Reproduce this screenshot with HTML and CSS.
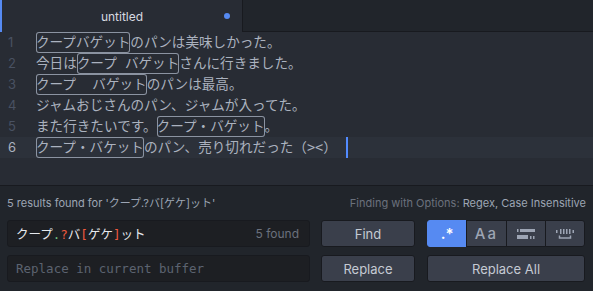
FILE: index.html
```html
<!DOCTYPE html>
<html lang="ja">
  <head>
    <meta charset="UTF-8" />
    <title>untitled</title>
    <link rel="stylesheet" href="styles.css">
  </head>
  <body>
    <div class="tabs">
      <div class="tab active">
        <span class="tab-title">untitled</span>
        <span class="modified"></span>
      </div>
      <div class="tab-rest"></div>
    </div>

    <div class="editor">
      <div class="line"><span class="num">1</span><span class="text"><span class="match">クープバゲット</span>のパンは美味しかった。</span></div>
      <div class="line"><span class="num">2</span><span class="text">今日は<span class="match">クープ バゲット</span>さんに行きました。</span></div>
      <div class="line"><span class="num">3</span><span class="text"><span class="match">クープ  バゲット</span>のパンは最高。</span></div>
      <div class="line"><span class="num">4</span><span class="text">ジャムおじさんのパン、ジャムが入ってた。</span></div>
      <div class="line"><span class="num">5</span><span class="text">また行きたいです。<span class="match">クープ・バゲット</span>。</span></div>
      <div class="line current"><span class="num">6</span><span class="text"><span class="match">クープ・バケット</span>のパン、売り切れだった（><）<span class="cursor"></span></span></div>
    </div>

    <div class="find-panel">
      <div class="status">
        <span>5 results found for 'クープ.?バ[ゲケ]ット'</span>
        <span class="options-label">Finding with Options: <b>Regex, Case Insensitive</b></span>
      </div>
      <div class="rows">
        <div class="input find-input">
          <span class="query">クープ<span class="re-any">.</span><span class="re-op">?</span>バ<span class="re-op">[</span>ゲケ<span class="re-op">]</span>ット</span>
          <span class="count">5 found</span>
        </div>
        <button class="btn">Find</button>
        <div class="btn-group">
          <button class="btn opt selected">.*</button>
          <button class="btn opt case">Aa</button>
          <button class="btn opt">
            <svg width="18" height="10" viewBox="0 0 18 10">
              <rect x="0" y="0" width="1.5" height="3" fill="#9da5b4"/>
              <rect x="3" y="0" width="15" height="3" fill="#9da5b4"/>
              <rect x="0" y="6" width="11" height="4" fill="#9da5b4"/>
              <rect x="13" y="7" width="1.5" height="3" fill="#9da5b4"/>
              <rect x="16" y="7" width="1.5" height="3" fill="#9da5b4"/>
            </svg>
          </button>
          <button class="btn opt">
            <svg width="18" height="10" viewBox="0 0 18 10">
              <rect x="0" y="1" width="1.5" height="3" fill="#9da5b4"/>
              <rect x="4" y="0" width="1.5" height="5" fill="#9da5b4"/>
              <rect x="7" y="0" width="1.5" height="5" fill="#9da5b4"/>
              <rect x="10" y="0" width="1.5" height="5" fill="#9da5b4"/>
              <rect x="13" y="0" width="1.5" height="5" fill="#9da5b4"/>
              <rect x="16.5" y="1" width="1.5" height="3" fill="#9da5b4"/>
              <path d="M3.5 6.5 V9 H14.5 V6.5" fill="none" stroke="#9da5b4" stroke-width="1.5"/>
            </svg>
          </button>
        </div>

        <div class="input replace-input">
          <span class="placeholder">Replace in current buffer</span>
        </div>
        <button class="btn">Replace</button>
        <button class="btn">Replace All</button>
      </div>
    </div>
  </body>
</html>
```

FILE: styles.css
```css
body {
  margin: 0;
  background-color: #21252b;
  font-family: Inter, Roboto, "Noto Sans CJK JP", sans-serif;
  color: #9da5b4;
  overflow: hidden;
}

/* tab bar */
.tabs {
  display: flex;
  height: 32px;
}

.tab {
  position: relative;
  width: 242px;
  box-sizing: border-box;
  background-color: #282c34;
  border-left: 2px solid #568af2;
  display: flex;
  align-items: center;
  justify-content: center;
}

.tab-title {
  font-size: 12px;
  color: #d7dae0;
}

.modified {
  position: absolute;
  right: 12px;
  top: 13px;
  width: 6px;
  height: 6px;
  border-radius: 50%;
  background-color: #568af2;
}

.tab-rest {
  flex: 1;
  background-color: #21252b;
  border-left: 1px solid #181a1f;
  border-bottom: 1px solid #181a1f;
}

/* editor */
.editor {
  height: 153px;
  background-color: #282c34;
  font-family: "DejaVu Sans Mono", "Noto Sans CJK JP", monospace;
  font-size: 13.6px;
  color: #abb2bf;
}

.line {
  display: flex;
  height: 21px;
  line-height: 21px;
  white-space: pre;
}

.line.current {
  background-color: #2c313a;
}

.num {
  width: 36px;
  box-sizing: border-box;
  padding-left: 8px;
  color: #495162;
  font-family: Inter, sans-serif;
  font-size: 13px;
}

.current .num {
  color: #abb2bf;
}

.match {
  display: inline-block;
  border-radius: 3px;
  box-shadow: inset 0 0 0 1px #8b93a1;
}

.cursor {
  display: inline-block;
  width: 2px;
  height: 21px;
  margin-left: 9px;
  vertical-align: top;
  background-color: #528bff;
}

/* find panel */
.find-panel {
  border-top: 1px solid #181a1f;
  padding: 0 7px;
}

.status {
  display: flex;
  justify-content: space-between;
  height: 34px;
  line-height: 34px;
  font-size: 11px;
  color: #9da5b4;
}

.options-label {
  color: #6b717d;
}

.options-label b {
  font-weight: normal;
  color: #9da5b4;
}

.rows {
  display: grid;
  grid-template-columns: 303px 94px 159px;
  grid-auto-rows: 27px;
  column-gap: 11px;
  row-gap: 8px;
}

.rows > .btn-group {
  margin-left: 1px;
}

.rows > .btn:last-child {
  margin-left: 1px;
}

.input {
  display: flex;
  align-items: center;
  justify-content: space-between;
  box-sizing: border-box;
  padding: 0 10px 0 8px;
  background-color: #1d1f23;
  border: 1px solid #181a1f;
  border-radius: 3px;
  font-family: "DejaVu Sans Mono", "Noto Sans CJK JP", monospace;
  font-size: 12.5px;
}

.query {
  color: #e6e9ee;
  white-space: pre;
}

.re-any {
  color: #6fbf7f;
}

.re-op {
  color: #f05a3f;
}

.count {
  font-family: Inter, sans-serif;
  font-size: 12px;
  color: #6b717d;
}

.placeholder {
  color: #5c6370;
}

.btn {
  box-sizing: border-box;
  height: 27px;
  padding: 0;
  background-color: #3a3f4b;
  border: 1px solid #181a1f;
  border-radius: 3px;
  font-family: Inter, sans-serif;
  font-size: 13px;
  color: #c5cad3;
}

.btn-group {
  display: flex;
}

.btn-group .opt {
  flex: 1;
  border-radius: 0;
  margin-left: -1px;
  display: flex;
  align-items: center;
  justify-content: center;
  font-size: 15px;
  font-weight: 600;
  color: #9da5b4;
}

.btn-group .opt.case {
  font-weight: 500;
  letter-spacing: 2px;
}

.btn-group .opt:first-child {
  margin-left: 0;
  border-radius: 3px 0 0 3px;
}

.btn-group .opt:last-child {
  border-radius: 0 3px 3px 0;
}

.btn-group .opt.selected {
  background-color: #568af2;
  border-color: #568af2;
  color: #ffffff;
}
```
